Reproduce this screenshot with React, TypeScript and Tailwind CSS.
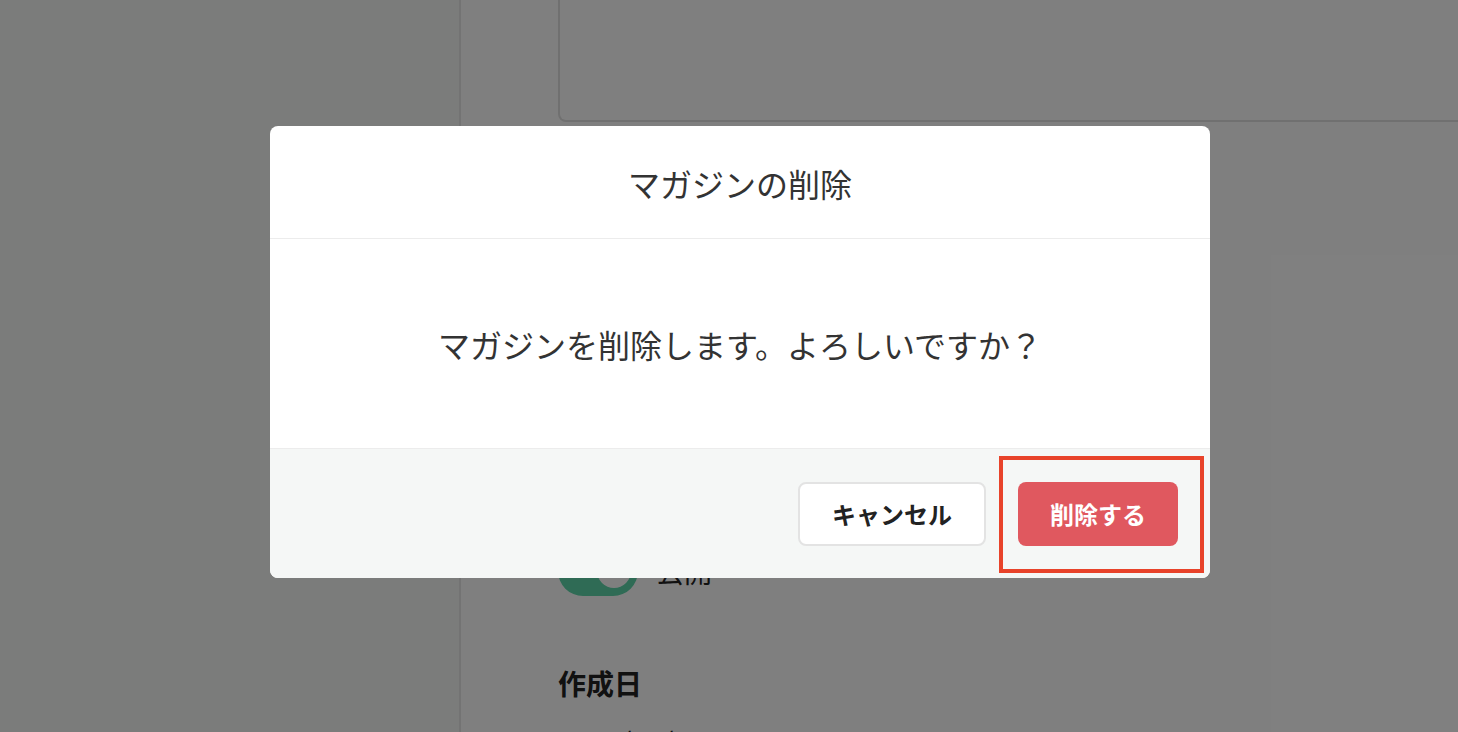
const font = { fontFamily: '"Noto Sans CJK JP", "Noto Sans", sans-serif' };

function Toggle() {
  return (
    <div className="relative h-[50px] w-[80px] shrink-0 rounded-full bg-[#5ed6aa]">
      <div className="absolute right-[7px] top-[8px] h-[34px] w-[34px] rounded-full bg-white" />
    </div>
  );
}

function PageBehind() {
  return (
    <div className="flex h-[732px] w-[1458px] overflow-hidden bg-white">
      <aside className="h-full w-[461px] shrink-0 border-r-2 border-[#e6e6e6] bg-[#f6f8f6]" />
      <main className="flex flex-1 flex-col pl-[97px] text-[#222]">
        <div className="mt-[-20px] h-[142px] w-[1000px] shrink-0 rounded-b-lg border-2 border-t-0 border-[#e0e0e0]" />
        <div className="mt-[424px] flex shrink-0 items-center gap-[18px]">
          <Toggle />
          <span className="text-[28px] leading-none">公開</span>
        </div>
        <h3 className="mt-[73px] shrink-0 text-[28px] font-bold leading-none">作成日</h3>
        <p className="mt-[30px] shrink-0 text-[28px] leading-none">2022/03/03</p>
      </main>
    </div>
  );
}

function DeleteModal() {
  return (
    <div className="relative w-[940px] overflow-hidden rounded-[8px] bg-white">
      <div className="flex h-[113px] items-center justify-center border-b border-[#ececec]">
        <h2 className="pt-[1px] text-[32px] font-normal text-[#333]">マガジンの削除</h2>
      </div>
      <div className="flex h-[210px] items-center justify-center border-b border-[#ececec]">
        <p className="text-[32px] text-[#333]">マガジンを削除します。よろしいですか？</p>
      </div>
      <div className="flex items-center justify-end gap-[32px] bg-[#f5f7f6] px-[32px] pb-[32px] pt-[33px]">
        <button className="h-[64px] w-[188px] rounded-[8px] border-2 border-[#e3e3e3] bg-white text-[24px] font-bold text-[#222]">
          キャンセル
        </button>
        <button className="h-[64px] w-[160px] rounded-[8px] bg-[#e0585f] text-[24px] font-bold text-white">
          削除する
        </button>
      </div>
      <div className="pointer-events-none absolute left-[729px] top-[330px] h-[117px] w-[205px] border-4 border-[#e8432a]" />
    </div>
  );
}

export default function App() {
  return (
    <div className="relative h-[732px] w-[1458px] overflow-hidden" style={font}>
      <PageBehind />
      <div className="absolute inset-0 bg-black/50 pl-[270px] pt-[126px]">
        <DeleteModal />
      </div>
    </div>
  );
}
